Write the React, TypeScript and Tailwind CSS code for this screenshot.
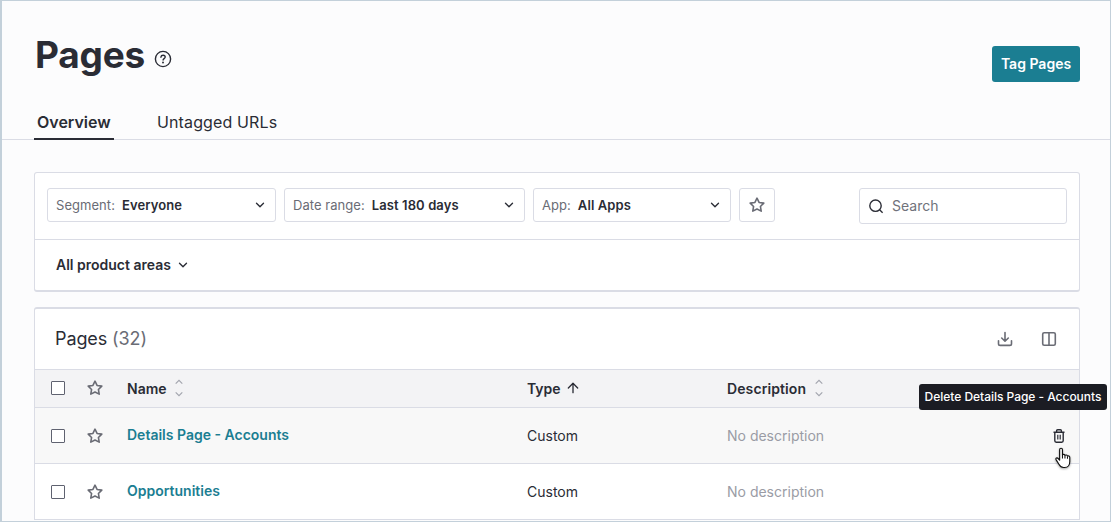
import { clsx } from "clsx";
import { ArrowUp, ChevronDown } from "lucide-react";

type PageRow = {
  id: number;
  name: string;
  type: string;
  hovered?: boolean;
};

const rows: PageRow[] = [
  { id: 1, name: "Details Page - Accounts", type: "Custom", hovered: true },
  { id: 2, name: "Opportunities", type: "Custom" },
];

function Checkbox() {
  return (
    <span className="block size-[14px] rounded-[1px] border border-[#5f6270] bg-white" />
  );
}

function StarIcon() {
  return (
    <svg width="16" height="16" viewBox="0 0 24 24" fill="none" stroke="#6a6c75" strokeWidth="2.4" strokeLinejoin="round">
      <path d="M12 1.8l3.1 6.4 7.1 1-5.1 5 1.2 7-6.3-3.3-6.3 3.3 1.2-7-5.1-5 7.1-1z" />
    </svg>
  );
}

function SortIcon() {
  return (
    <svg width="8" height="18" viewBox="0 0 8 18" fill="none" stroke="#a3a5ae" strokeWidth="1.2">
      <path d="M0.7 4.6 4 1.4l3.3 3.2M0.7 13.4 4 16.6l3.3-3.2" />
    </svg>
  );
}

function HelpIcon() {
  return (
    <svg width="18" height="18" viewBox="0 0 18 18" fill="none" stroke="#2a2c35" strokeWidth="1.4">
      <circle cx="9" cy="9" r="7.6" />
      <path d="M6.9 7.2c.2-1.3 1-1.9 2.2-1.9 1.2 0 2.1.8 2.1 1.8 0 1.5-2.1 1.6-2.1 3" strokeLinecap="round" />
      <circle cx="9" cy="12.5" r=".95" fill="#2a2c35" stroke="none" />
    </svg>
  );
}

function DownloadIcon() {
  return (
    <svg width="16" height="16" viewBox="0 0 16 16" fill="none" stroke="#6a6c75" strokeWidth="1.6" strokeLinecap="round" strokeLinejoin="round">
      <path d="M8 1.5V10M4.7 7 8 10.2 11.3 7M1.5 9.8v2.9c0 1 .7 1.7 1.7 1.7h9.6c1 0 1.7-.7 1.7-1.7V9.8" />
    </svg>
  );
}

function ColumnsIcon() {
  return (
    <svg width="16" height="16" viewBox="0 0 16 16" fill="none" stroke="#6a6c75" strokeWidth="1.6">
      <rect x="1.7" y="1.7" width="12.6" height="12.6" rx="1.5" />
      <path d="M8 1.7v12.6" />
    </svg>
  );
}

function TrashIcon() {
  return (
    <svg width="12" height="14" viewBox="0 0 12 14" fill="none" stroke="#2a2c35" strokeWidth="1.4">
      <path d="M.5 3.2h11M3.6 3V1.8c0-.6.4-1 1-1h2.8c.6 0 1 .4 1 1V3M1.8 3.4v8.4c0 .8.6 1.4 1.4 1.4h5.6c.8 0 1.4-.6 1.4-1.4V3.4" />
      <path d="M4.8 5.8v4.8M7.2 5.8v4.8" strokeWidth="1.2" />
    </svg>
  );
}

function HandCursor() {
  return (
    <svg width="19" height="23" viewBox="0 0 18 22" className="drop-shadow-[0_1px_1px_rgba(0,0,0,0.35)]">
      <path
        d="M5.3 12.6V2.7c0-2 2.7-2 2.7 0v5c.5-1 2.2-.8 2.4.4.6-.8 2.2-.5 2.4.7.8-.7 2.2-.1 2.2 1.2v4c0 2.6-1.5 5.6-4.9 5.6H9c-2.3 0-3.4-1.3-4.4-3.1L2 12.3c-.9-1.6.8-2.5 1.9-1.3z"
        fill="#fff"
        stroke="#111"
        strokeWidth="1.1"
        strokeLinejoin="round"
      />
      <path d="M8 7.5V11M10.4 8.2V11M12.8 9v2.2" stroke="#111" strokeWidth="1" fill="none" />
    </svg>
  );
}

function FilterSelect({ label, value, className }: { label: string; value: string; className: string }) {
  return (
    <button
      className={clsx(
        "flex h-[34px] items-center rounded-[3px] border border-[#dadce5] bg-white pl-2 pr-2 text-[13px]",
        className,
      )}
    >
      <span className="pt-px tracking-[0.05px] text-[#6a6c75]">{label}</span>
      <span className="ml-[7px] pt-px font-semibold tracking-[0.1px]">{value}</span>
      <ChevronDown size={14} strokeWidth={2.3} className="ml-auto" />
    </button>
  );
}

export default function App() {
  return (
    <div className="flex h-[522px] w-[1111px] flex-col overflow-hidden border border-l-2 border-[#c3d0da] bg-[#fcfcfd] font-[Inter,sans-serif] text-[#2a2c35]">
      <header className="flex h-[139px] shrink-0 flex-col border-b border-[#dadce5]">
        <div className="flex h-[103px] shrink-0 justify-between pl-[33px] pr-[30px]">
          <div className="flex pt-[31px]">
            <h1 className="text-[37px] font-bold leading-[46px] tracking-[-0.2px]">Pages</h1>
            <span className="ml-[9px] mt-[18px]">
              <HelpIcon />
            </span>
          </div>
          <button className="mt-[45px] h-9 w-[88px] rounded-[3px] bg-[#1b7e92] text-sm font-semibold text-white">
            Tag Pages
          </button>
        </div>
        <nav className="flex h-9 shrink-0 pl-8 text-base">
          <a className="h-9 w-20 border-b-2 border-[#2a2c35] pl-[3px] font-semibold leading-9">Overview</a>
          <a className="ml-[43px] leading-9 tracking-[0.13px]">Untagged URLs</a>
        </nav>
      </header>

      <main className="flex flex-col gap-[15px] pl-8 pr-[30px] pt-8">
        <section className="h-[120px] rounded-[3px] border border-b-2 border-[#dadce5] bg-white">
          <div className="flex h-[67px] items-start gap-2 border-b border-[#dadce5] pl-3 pr-3 pt-[15px]">
            <FilterSelect label="Segment:" value="Everyone" className="w-[229px]" />
            <FilterSelect label="Date range:" value="Last 180 days" className="w-[241px]" />
            <FilterSelect label="App:" value="All Apps" className="w-[198px]" />
            <button className="flex h-[34px] w-9 items-center justify-center rounded-[3px] border border-[#dadce5]">
              <StarIcon />
            </button>
            <div className="ml-auto flex h-9 w-[208px] items-center rounded-[3px] border border-[#dadce5] pl-[9px]">
              <svg width="15" height="15" viewBox="0 0 15 15" fill="none" stroke="#2a2c35" strokeWidth="1.4">
                <circle cx="6.5" cy="6.7" r="5.7" />
                <path d="m10.6 10.8 3 3" />
              </svg>
              <span className="ml-2 text-sm text-[#70727b]">Search</span>
            </div>
          </div>
          <button className="flex h-[50px] items-center pb-px pl-[21px] text-sm font-semibold">
            All product areas
            <ChevronDown size={14} strokeWidth={2.3} className="ml-[5px]" />
          </button>
        </section>

        <section className="rounded-t-[3px] border border-b-0 border-t-2 border-[#dadce5] bg-white">
          <div className="flex h-[60px] items-center justify-between pl-5 pr-[22px]">
            <h2 className="text-lg tracking-[-0.1px]">
              Pages <span className="text-[#6a6c75]">(32)</span>
            </h2>
            <div className="flex gap-7">
              <DownloadIcon />
              <ColumnsIcon />
            </div>
          </div>
          <div className="grid h-[39px] grid-cols-[36px_40px_400px_200px_1fr] items-center border-y border-[#dadce5] bg-[#f3f3f5] pl-4 text-sm font-semibold">
            <span className="pb-0.5">
              <Checkbox />
            </span>
            <span className="pb-px">
              <StarIcon />
            </span>
            <span className="flex items-center gap-2">
              Name
              <span className="pb-0.5">
                <SortIcon />
              </span>
            </span>
            <span className="flex items-center gap-1">
              Type
              <ArrowUp size={16} strokeWidth={2} className="mb-0.5" />
            </span>
            <span className="flex items-center gap-[9px] tracking-[0.1px]">
              Description
              <span className="pb-0.5">
                <SortIcon />
              </span>
            </span>
          </div>
          {rows.map((row) => (
            <div
              key={row.id}
              className={clsx(
                "relative grid h-14 grid-cols-[36px_40px_400px_200px_1fr] items-center border-b border-[#dadce5] pl-4 text-sm",
                row.hovered && "bg-[#f8f8f8]",
              )}
            >
              <Checkbox />
              <StarIcon />
              <a className="pb-0.5 font-semibold text-[#1b7e92]">{row.name}</a>
              <span>{row.type}</span>
              <span className="flex items-center justify-between pr-3.5 text-[#9a9ca5]">
                No description
                {row.hovered && <TrashIcon />}
              </span>
              {row.hovered && (
                <>
                  <div className="absolute -right-[28px] -top-6 flex h-[26px] w-[188px] items-center justify-center whitespace-nowrap rounded-[3px] bg-[#1b1c23] text-xs font-medium tracking-[-0.03px] text-white">
                    Delete Details Page - Accounts
                  </div>
                  <div className="absolute right-[6px] top-[39px] z-10">
                    <HandCursor />
                  </div>
                </>
              )}
            </div>
          ))}
        </section>
      </main>
    </div>
  );
}
